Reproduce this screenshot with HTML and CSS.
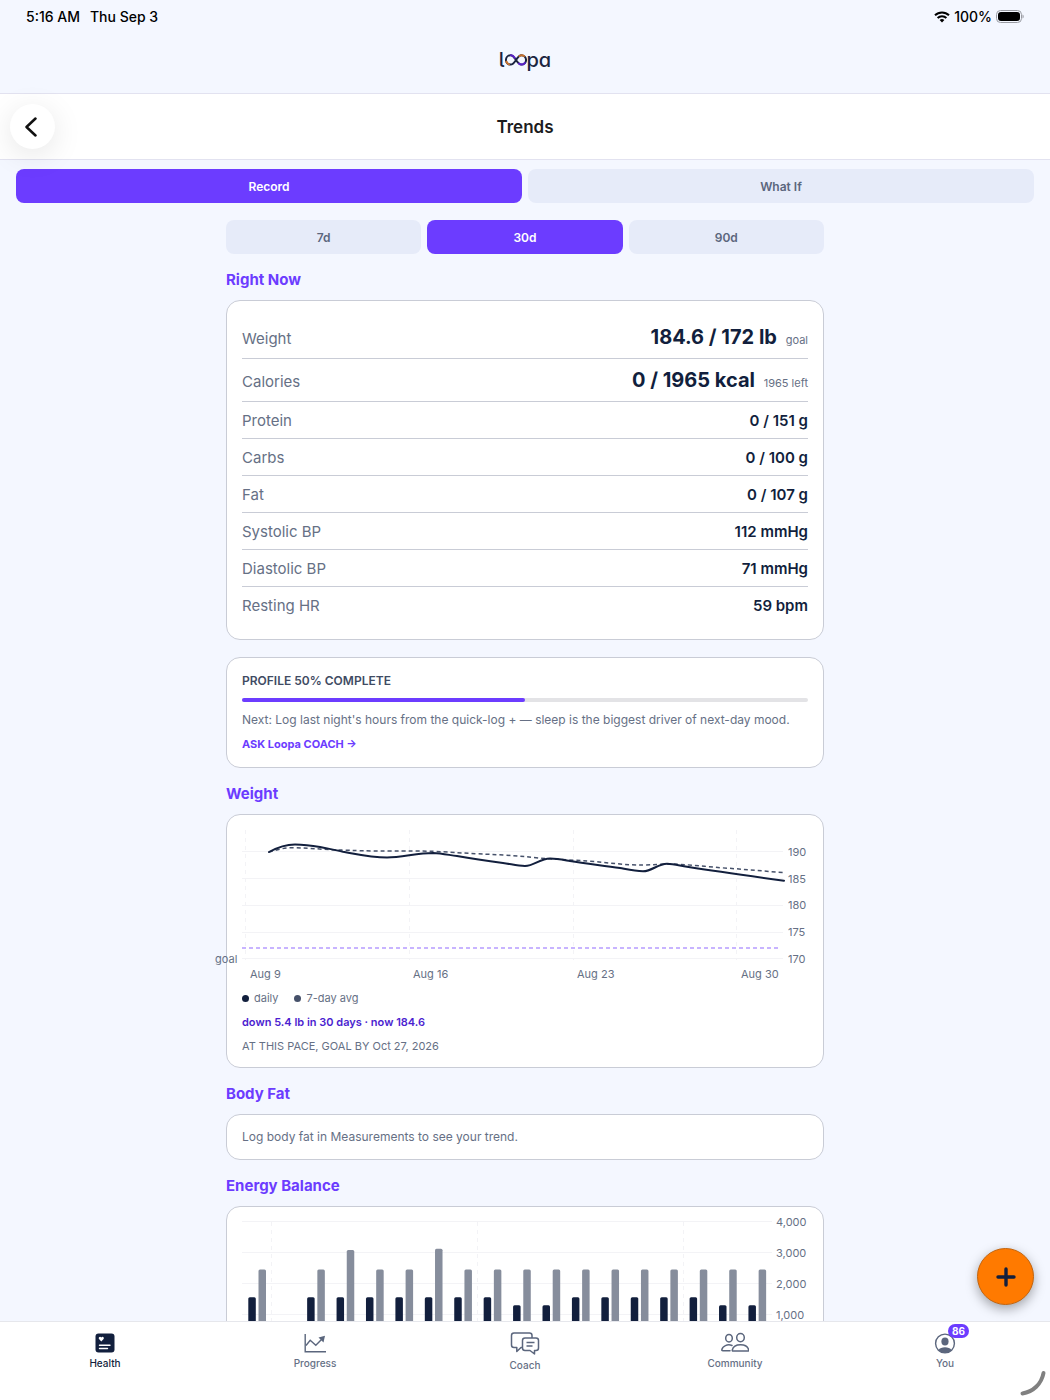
FILE: index.html
```html
<!DOCTYPE html>
<html lang="en">
<head>
  <meta charset="UTF-8">
  <meta name="viewport" content="width=device-width, initial-scale=1">
  <title>Loopa - Trends</title>
  <link rel="stylesheet" href="styles.css">
</head>
<body>

  <div class="status-bar">
    <div class="status-left">
      <span>5:16 AM</span>
      <span>Thu Sep 3</span>
    </div>
    <div class="status-right">
      <svg width="16" height="12" viewBox="0 0 16 12" fill="none" stroke="#000" stroke-width="2">
        <path d="M1 4.3a10 10 0 0 1 14 0M3.6 7a6.300 6.300 0 0 1 8.800 0"/>
        <path d="M8 11.600l-2.400-2.500a3.400 3.400 0 0 1 4.800 0z" fill="#000" stroke="none"/>
      </svg>
      <span>100%</span>
      <svg width="28" height="13" viewBox="0 0 28 13">
        <rect x=".5" y=".5" width="25" height="12" rx="4" fill="none" stroke="#9a9ca3"/>
        <rect x="2" y="2" width="22" height="9" rx="3" fill="#000"/>
        <path d="M26.500 4.500v4c1.600-.6 1.600-3.400 0-4z" fill="#9a9ca3"/>
      </svg>
    </div>
  </div>

  <div class="brand">
    <span>l</span>
    <svg width="22" height="12" viewBox="0 0 22 12" fill="none" stroke-width="2" stroke-linecap="round">
      <path d="M11 6C9 3 7.800 1.300 5.600 1.300a4.600 4.600 0 0 0 0 9.300C8 10.600 9.400 8.400 11 6s3-4.700 5.400-4.700a4.600 4.600 0 0 1 0 9.300C14.200 10.600 13 9 11 6z" stroke="#1b2440"/>
      <path d="M6 1.300c1.600.1 2.700 1 3.700 2.500M19.800 8.800c-1.500 2-4 2.300-6 .7" stroke="#5b20c8"/>
      <path d="M1.400 7.600c.5 1.300 1.400 2.200 2.600 2.700M14.500 2c1.500-.9 3.200-.8 4.500 0" stroke="#c8722e"/>
    </svg>
    <span>pa</span>
  </div>

  <header class="page-header">
    <button type="button" class="back-btn" aria-label="Back">
      <svg width="14" height="20" viewBox="0 0 14 20" fill="none" stroke="#111" stroke-width="2.500" stroke-linecap="round" stroke-linejoin="round">
        <path d="M11.500 1.500L2.500 10l9 8.500"/>
      </svg>
    </button>
    <h1>Trends</h1>
  </header>

  <div class="content">
    <main>
      <div class="tabs mode-tabs">
        <button type="button" class="tab active">Record</button>
        <button type="button" class="tab">What If</button>
      </div>

      <div class="column">
        <div class="tabs">
          <button type="button" class="tab">7d</button>
          <button type="button" class="tab active">30d</button>
          <button type="button" class="tab">90d</button>
        </div>

        <h2>Right Now</h2>
        <dl class="card stats">
          <div class="row big"><dt>Weight</dt><dd>184.6 / 172 lb <small>goal</small></dd></div>
          <div class="row big"><dt>Calories</dt><dd>0 / 1965 kcal <small>1965 left</small></dd></div>
          <div class="row"><dt>Protein</dt><dd>0 / 151 g</dd></div>
          <div class="row"><dt>Carbs</dt><dd>0 / 100 g</dd></div>
          <div class="row"><dt>Fat</dt><dd>0 / 107 g</dd></div>
          <div class="row"><dt>Systolic BP</dt><dd>112 mmHg</dd></div>
          <div class="row"><dt>Diastolic BP</dt><dd>71 mmHg</dd></div>
          <div class="row"><dt>Resting HR</dt><dd>59 bpm</dd></div>
        </dl>

        <div class="card profile">
          <h3>PROFILE 50% COMPLETE</h3>
          <div class="progress"><div class="progress-fill"></div></div>
          <p>Next: Log last night's hours from the quick-log + — sleep is the biggest driver of next-day mood.</p>
          <a href="#coach">ASK Loopa COACH →</a>
        </div>

        <h2>Weight</h2>
        <div class="card chart-card">
          <svg class="chart" viewBox="0 0 566 160" role="img" aria-label="Weight, last 30 days">
            <path class="grid" d="M0 21.500h541M0 48.500h541M0 75.500h541M0 102.500h541M0 128.500h541"/>
            <path class="grid dashed" d="M3.500 0v130M167.500 0v130M331.500 0v130M494.500 0v130"/>
            <path class="goal-line" d="M0 118h539"/>
            <path class="avg-line" d="M27 22C34 20 42 17.700 50 17.700C70 18 85 20 101 20C120 21 132 21 145 21C165 21 180 21 191 21.300C205 22 215 22.600 221 23C240 24 250 24.500 261 25C275 26 285 26.600 298 28.300C312 29 330 30 345 31C365 32.500 385 35.300 401 35C410 35 418 34 425 34C440 34 460 36 478 37.700C500 39 520 41 541 42.500"/>
            <path class="daily-line" d="M27 22C36 17 44 14.400 53 14.400C62 14.400 70 15.500 78 17C88 19 94 20 101 21.700C114 24 130 27.500 145 27.500C160 27.500 175 23 191 23C200 23.400 207 25 215 26C232 29 246 31 261 33C269 34 275 36 283 36C292 36 298 28.500 308 28.500C315 28.500 322 30 328 31C344 33.500 361 35.500 378 38C388 40 393 41.300 401 41.300C410 41.300 416 33.700 425 33.700C432 33.700 438 35.700 445 36.700C476 41.500 508 46 542 50.700"/>
            <g class="axis">
              <text x="546" y="26">190</text>
              <text x="546" y="53">185</text>
              <text x="546" y="79">180</text>
              <text x="546" y="106">175</text>
              <text x="546" y="133">170</text>
              <text x="-27" y="133">goal</text>
              <text x="8" y="148">Aug 9</text>
              <text x="171" y="148">Aug 16</text>
              <text x="335" y="148">Aug 23</text>
              <text x="499" y="148">Aug 30</text>
            </g>
          </svg>
          <div class="legend">
            <span><i class="dot"></i>daily</span>
            <span><i class="dot avg"></i>7-day avg</span>
          </div>
          <p class="summary">down 5.4 lb in 30 days · now 184.6</p>
          <p class="pace">AT THIS PACE, GOAL BY Oct 27, 2026</p>
        </div>

        <h2>Body Fat</h2>
        <div class="card note">
          <p>Log body fat in Measurements to see your trend.</p>
        </div>

        <h2>Energy Balance</h2>
        <div class="card">
          <svg class="chart" viewBox="0 0 566 140" role="img" aria-label="Energy balance, last 30 days">
            <path class="grid" d="M0 -.5h530M0 30.500h530M0 61.500h530M0 92.500h530M0 123.500h530"/>
            <path class="grid dashed" d="M29.500 0v124M235.500 0v124M441.500 0v124"/>
            <g id="energyBars"></g>
            <g class="axis">
              <text x="534" y="4">4,000</text>
              <text x="534" y="35">3,000</text>
              <text x="534" y="66">2,000</text>
              <text x="534" y="97">1,000</text>
            </g>
          </svg>
        </div>
      </div>
    </main>

    <button type="button" class="fab" aria-label="Quick log">
      <svg width="20" height="20" viewBox="0 0 20 20" stroke="#121f3d" stroke-width="3.400" stroke-linecap="round">
        <path d="M10 2v16M2 10h16"/>
      </svg>
    </button>
  </div>

  <nav class="tab-bar">
    <a href="#health" class="active">
      <svg width="22" height="22" viewBox="0 0 22 22">
        <rect x="1.500" y="1.500" width="19" height="19" rx="3" fill="#121f3d"/>
        <path d="M7.300 9.400L5 7c-1-1.300.9-3.200 2.300-1.600C8.700 3.800 10.600 5.700 9.600 7z" fill="#fff"/>
        <path d="M5.500 13.200h10.500M5.500 16.500h8" stroke="#fff" stroke-width="1.400" stroke-linecap="round"/>
      </svg>
      <span>Health</span>
    </a>
    <a href="#progress">
      <svg width="22" height="22" viewBox="0 0 22 22" fill="none" stroke="#5b667d" stroke-width="1.400">
        <path d="M1.200 2v17.700H22"/>
        <path d="M2 13.500l4.200-5.200 5.600 5L19 6"/>
        <path d="M14.500 5.500l6.500-1.700-1.500 6.700z" fill="#5b667d" stroke="none"/>
      </svg>
      <span>Progress</span>
    </a>
    <a href="#coach">
      <svg width="30" height="24" viewBox="0 0 30 24" fill="#fff" stroke="#5b667d" stroke-width="1.500" stroke-linejoin="round">
        <path d="M4 1h15.500q2.500 0 2.500 2.500v9.500q0 2.500-2.500 2.500H11l-4.200 4v-4H4q-2.500 0-2.500-2.500V3.500Q1.500 1 4 1z"/>
        <path d="M15 6h11q2.500 0 2.500 2.500V16q0 2.500-2.500 2.500h-1.500V22L20 18.500h-5q-2.500 0-2.500-2.500V8.500Q12.500 6 15 6z"/>
        <path d="M16.500 10.500h8M16.500 14h6"/>
      </svg>
      <span>Coach</span>
    </a>
    <a href="#community">
      <svg width="28" height="22" viewBox="0 0 28 22" fill="none" stroke="#5b667d" stroke-width="1.500" stroke-linecap="round" stroke-linejoin="round">
        <ellipse cx="8" cy="6.200" rx="3.300" ry="3.700"/>
        <ellipse cx="19.500" cy="5.600" rx="3.800" ry="4.200"/>
        <path d="M11 13.500c-4.500-1.800-9.600.6-10.200 4.300q-.1 1 1 1H9"/>
        <path d="M12 19h15q.9 0 .7-1c-1.600-7-14.800-7-16.400 0q-.2 1 .7 1z"/>
      </svg>
      <span>Community</span>
    </a>
    <a href="#you">
      <span class="avatar">
        <svg width="22" height="22" viewBox="0 0 22 22">
          <circle cx="11" cy="11.500" r="9.400" fill="none" stroke="#5b667d" stroke-width="1.400"/>
          <ellipse cx="11" cy="9.500" rx="3.600" ry="4" fill="#5b667d"/>
          <path d="M4.300 18.200c2.700-3.800 10.700-3.800 13.400 0a9.400 9.400 0 0 1-13.400 0z" fill="#5b667d"/>
        </svg>
        <b class="badge">86</b>
      </span>
      <span>You</span>
    </a>
    <svg class="corner" width="26" height="26" viewBox="0 0 26 26" fill="none" stroke="#808080" stroke-width="4" stroke-linecap="round">
      <path d="M2.500 23.500C13 22 21.500 14 23.500 3"/>
    </svg>
  </nav>

  <script>
    // [day, eaten, burned] in kcal
    const energy = [
      [0, 1560, 2450], [2, 1560, 2450], [3, 1560, 3080], [4, 1560, 2450],
      [5, 1560, 2450], [6, 1560, 3120], [7, 1560, 2450], [8, 1560, 2450],
      [9, 1300, 2450], [10, 1300, 2450], [11, 1560, 2450], [12, 1560, 2450],
      [13, 1560, 2450], [14, 1560, 2450], [15, 1560, 2450], [16, 1300, 2450],
      [17, 1300, 2450]
    ];
    const baseline = 123.5;
    const bars = document.getElementById("energyBars");

    function addBar(x, kcal, className) {
      const height = kcal * 0.031;
      const rect = document.createElementNS("http://www.w3.org/2000/svg", "rect");
      rect.setAttribute("class", className);
      rect.setAttribute("x", x);
      rect.setAttribute("y", baseline - height);
      rect.setAttribute("width", 7.5);
      rect.setAttribute("height", height);
      rect.setAttribute("rx", 1.5);
      bars.appendChild(rect);
    }

    energy.forEach(([day, eaten, burned]) => {
      const x = 6.3 + day * 29.42;
      addBar(x, eaten, "bar-in");
      addBar(x + 10.2, burned, "bar-out");
    });
  </script>

</body>
</html>
```

FILE: styles.css
```css
* {
  box-sizing: border-box;
}

body {
  margin: 0;
  height: 100vh;
  display: flex;
  flex-direction: column;
  font-family: Inter, "Liberation Sans", sans-serif;
  background: #f4f7ff;
  color: #121f3d;
}

h1, h2, h3, p, dl, dd {
  margin: 0;
}

button {
  font-family: inherit;
  border: none;
  padding: 0;
  cursor: pointer;
}

a {
  text-decoration: none;
}

svg {
  display: block;
}

.status-bar {
  display: flex;
  justify-content: space-between;
  align-items: center;
  height: 33px;
  padding: 0 26px;
  font-size: 14px;
  font-weight: 500;
  color: #000;
}

.status-left {
  display: flex;
  gap: 10px;
}

.status-right {
  display: flex;
  align-items: center;
  gap: 4px;
}

.brand {
  display: flex;
  justify-content: center;
  align-items: center;
  height: 60px;
  padding-bottom: 6px;
  font-size: 20px;
  font-weight: 500;
  color: #1b2440;
  font-feature-settings: "cv11", "cv05";
}

.page-header {
  display: flex;
  justify-content: center;
  align-items: center;
  position: relative;
  height: 67px;
  background: #fff;
  border-top: 1px solid #e2e2f0;
  border-bottom: 1px solid #e2e2f0;
}

.page-header h1 {
  font-size: 17px;
  font-weight: 600;
  color: #1c1c1e;
}

.back-btn {
  position: absolute;
  left: 10px;
  z-index: 1;
  display: flex;
  justify-content: center;
  align-items: center;
  width: 45px;
  height: 45px;
  padding-right: 3px;
  border-radius: 50%;
  background: #fff;
  box-shadow: 0 6px 30px rgba(0, 0, 0, 0.1);
}

.content {
  position: relative;
  flex: 1;
  min-height: 0;
}

main {
  height: 100%;
  overflow-y: auto;
  scrollbar-width: none;
  padding: 9px 16px 24px;
}

.tabs {
  display: flex;
  gap: 6px;
}

.mode-tabs {
  margin-bottom: 17px;
}

.tab {
  flex: 1;
  height: 34px;
  border-radius: 8px;
  background: #e6ebf9;
  color: #5b667d;
  font-size: 12px;
  font-weight: 600;
}

.tab.active {
  background: #6c3cff;
  color: #fff;
}

.column {
  max-width: 598px;
  margin: 0 auto;
}

h2 {
  margin: 16px 0 10px;
  font-size: 15px;
  line-height: 20px;
  font-weight: 700;
  color: #6c3cff;
}

.card {
  padding: 15px;
  background: #fff;
  border: 1px solid #c9ccd6;
  border-radius: 14px;
}

.row {
  display: flex;
  justify-content: space-between;
  align-items: center;
  height: 37px;
  border-bottom: 1px solid #c9ccd6;
  font-size: 15px;
}

.row:last-child {
  border-bottom: none;
}

.row dt {
  color: #667085;
}

.row dd {
  font-weight: 600;
}

.row.big {
  height: 43px;
  align-items: baseline;
  padding-top: 9px;
}

.row.big dd {
  font-size: 20px;
  font-weight: 700;
}

.row small {
  margin-left: 4px;
  font-size: 11px;
  font-weight: 400;
  color: #667085;
}

.profile {
  margin-top: 17px;
  line-height: 16px;
}

.profile h3 {
  font-size: 12px;
  font-weight: 600;
  color: #3f4b63;
}

.progress {
  height: 4px;
  margin: 9px 0 10px;
  border-radius: 2px;
  background: #e3e3e6;
}

.progress-fill {
  width: 50%;
  height: 100%;
  border-radius: 2px;
  background: #6c3cff;
}

.profile p,
.note p {
  font-size: 12px;
  color: #667085;
}

.profile a {
  display: block;
  margin-top: 8px;
  font-size: 11px;
  font-weight: 700;
  color: #6c3cff;
}

.note {
  line-height: 14px;
}

.chart-card {
  padding-bottom: 13px;
  font-size: 11px;
  line-height: 16px;
  color: #667085;
}

.chart {
  width: 100%;
  overflow: visible;
}

.grid {
  stroke: #f3f3f6;
  fill: none;
}

.grid.dashed {
  stroke-dasharray: 4 4;
}

.goal-line {
  stroke: #b79cff;
  stroke-width: 1.5;
  stroke-dasharray: 4 3;
}

.daily-line {
  fill: none;
  stroke: #121f3d;
  stroke-width: 2;
  stroke-linecap: round;
}

.avg-line {
  fill: none;
  stroke: #46516a;
  stroke-width: 1.5;
  stroke-dasharray: 4 3;
}

.axis {
  font-size: 11px;
  fill: #667085;
}

.bar-in {
  fill: #121f3d;
}

.bar-out {
  fill: #868d9c;
}

.legend {
  display: flex;
  gap: 16px;
}

.legend span {
  display: flex;
  align-items: center;
  gap: 5px;
}

.dot {
  width: 7px;
  height: 7px;
  border-radius: 50%;
  background: #121f3d;
}

.dot.avg {
  background: #46516a;
}

.summary {
  margin: 8px 0;
  font-weight: 600;
  color: #4c1fd0;
}

.fab {
  position: absolute;
  right: 16px;
  bottom: 16px;
  display: flex;
  justify-content: center;
  align-items: center;
  width: 57px;
  height: 57px;
  border: 1px solid #c4640c;
  border-radius: 50%;
  background: #ff7a00;
  box-shadow: 0 4px 12px rgba(0, 0, 0, 0.35);
}

.tab-bar {
  position: relative;
  display: flex;
  height: 79px;
  background: #fff;
  border-top: 1px solid #e6e7ec;
}

.tab-bar a {
  flex: 1;
  display: flex;
  flex-direction: column;
  align-items: center;
  gap: 2px;
  padding-top: 10px;
  font-size: 10px;
  line-height: 14px;
  font-weight: 500;
  color: #667085;
}

.tab-bar a.active {
  color: #121f3d;
}

.avatar {
  position: relative;
}

.badge {
  position: absolute;
  left: 14px;
  top: -8px;
  padding: 0 4px;
  border-radius: 7px;
  background: #6c3cff;
  color: #fff;
  font-size: 10px;
  font-weight: 700;
}

.corner {
  position: absolute;
  right: 4px;
  bottom: 4px;
}
```
